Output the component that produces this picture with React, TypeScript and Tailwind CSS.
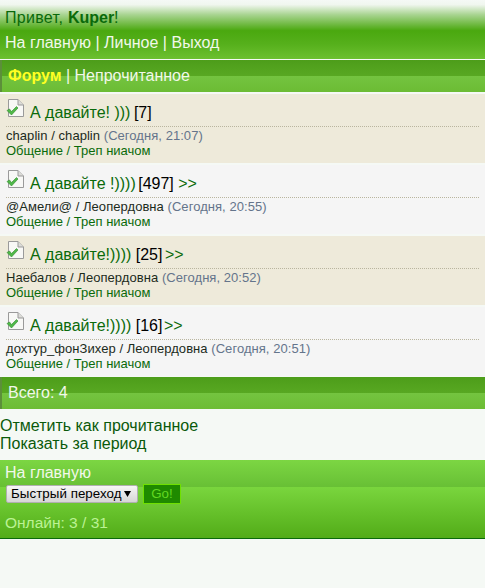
const FONT = "font-['Liberation_Sans',Arial,sans-serif]";

const TOPICS = [
  { title: "А давайте! )))", count: "[7]", countClass: "-ml-[1px]", moreClass: "", more: false, author: "chaplin", last: "chaplin", time: "(Сегодня, 21:07)", bg: "bg-[#eeeada]" },
  { title: "А давайте !))))", count: "[497]", countClass: "-ml-[2px]", moreClass: "", more: true, author: "@Амели@", last: "Леопердовна", time: "(Сегодня, 20:55)", bg: "bg-[#f5f5f5]" },
  { title: "А давайте!))))", count: "[25]", countClass: "", moreClass: "-ml-[2px]", more: true, author: "Наебалов", last: "Леопердовна", time: "(Сегодня, 20:52)", bg: "bg-[#eeeada]" },
  { title: "А давайте!))))", count: "[16]", countClass: "", moreClass: "-ml-[3px]", more: true, author: "дохтур_фонЗихер", last: "Леопердовна", time: "(Сегодня, 20:51)", bg: "bg-[#f5f5f5]" },
];

function TopicIcon() {
  return (
    <svg width="18" height="19" viewBox="0 0 18 19" className="shrink-0">
      <path d="M2.5 0.5H12L17.5 6V17.5H2.5Z" fill="#f8f8f6" stroke="#9a9a9a" />
      <path d="M12 0.5V6H17.5" fill="#dcdcd8" stroke="#9a9a9a" />
      <path d="M1 11.5L3.5 10L5.5 12.5L10.5 7.5L12 9L5.5 16Z" fill="#4fb848" stroke="#2f8a2c" strokeWidth="0.6" />
    </svg>
  );
}

function SectionBar({ children }: { children: React.ReactNode }) {
  return (
    <div className="flex h-[32px] items-center border-l-2 border-[#5c8f3a] bg-[linear-gradient(#4d9d1a_0%,#58a822_50%,#74c440_50%,#6cbc34_100%)] pl-[6px] text-[16px] text-[#f2f8ea]">
      {children}
    </div>
  );
}

function TopicRow({ topic }: { topic: (typeof TOPICS)[number] }) {
  return (
    <div className={`${topic.bg} h-[69px] px-[6px] pt-[5px]`}>
      <div className="flex h-[28px] items-start gap-[6px] border-b border-dotted border-[#b9b59f] text-[16px]">
        <TopicIcon />
        <div className="whitespace-pre pt-[5px] leading-[18px]">
          <a className="text-[#0a6a0a]">{topic.title} </a>
          <span className={`${topic.countClass} text-black`}>{topic.count} </span>
          {topic.more && <span className={`${topic.moreClass} text-[#0a6a0a]`}>&gt;&gt;</span>}
        </div>
      </div>
      <div className="pt-px text-[13px] leading-[15px] tracking-[0.05px] text-[#1c2b1c]">
        {topic.author} / {topic.last} <span className="text-[#64748b]">{topic.time}</span>
      </div>
      <div className="text-[13px] leading-[15px] text-[#0a6a0a]">Общение / Треп ниачом</div>
    </div>
  );
}

export default function App() {
  return (
    <div className={`${FONT} min-h-[588px] bg-[#f5f9f5]`}>
      <header className="h-[59px] bg-[linear-gradient(#f5f9f5_0%,#f0f6ee_8%,#a8d490_25%,#4aa80f_52%,#56b01c_75%,#6cc030_100%)] px-[5px] pt-[9px] text-[16px] leading-[18px]">
        <div className="text-[#0a6a0a]">
          <span className="tracking-[0.3px]">Привет, </span>
          <b>Kuper</b>!
        </div>
        <div className="pt-[7px] text-[#f2f8ea]">На главную | Личное | Выход</div>
      </header>
      <div className="pt-px">
        <SectionBar>
          <b className="text-[#ffff22]">Форум</b>
          <span className="whitespace-pre"> | Непрочитанное</span>
        </SectionBar>
      </div>
      <div className="flex flex-col gap-[2px] pt-[2px]">
        {TOPICS.map((topic) => (
          <TopicRow key={topic.time} topic={topic} />
        ))}
      </div>
      <div className="pt-px">
        <SectionBar>Всего: 4</SectionBar>
      </div>
      <div className="pt-[8px] text-[16px] leading-[18px] text-[#0a5a0a]">
        <div>Отметить как прочитанное</div>
        <div>Показать за период</div>
      </div>
      <footer className="mt-[7px] h-[79px] border-b border-[#0a6a0a] bg-[linear-gradient(#7cd643_0%,#68c035_34%,#7ad63e_34%,#52ac18_100%)] px-[5px] pt-[4px] text-[16px] leading-[18px]">
        <div className="text-[#f2f8ea]">На главную</div>
        <div className="flex items-center gap-[5px] pl-px pt-[2px]">
          <div className="flex h-[18px] w-[132px] items-center justify-between rounded-[2px] border border-[#b0b0b0] bg-[linear-gradient(#f6f6f6,#d6d6d6)] pl-[4px] pr-[6px] text-[13.33px] text-black">
            <span className="tracking-[0.05px]">Быстрый переход</span>
            <svg width="7" height="6" viewBox="0 0 7 6">
              <path d="M0 0H7L3.5 6Z" fill="#000" />
            </svg>
          </div>
          <div className="flex h-[20px] w-[38px] items-center justify-center border border-[#6fe000] bg-[#1f8a00] text-[13.33px] text-[#62d820]">
            Go!
          </div>
        </div>
        <div className="pt-[10px] text-[15.5px] text-[#bcf294]">Онлайн: 3 / 31</div>
      </footer>
    </div>
  );
}
